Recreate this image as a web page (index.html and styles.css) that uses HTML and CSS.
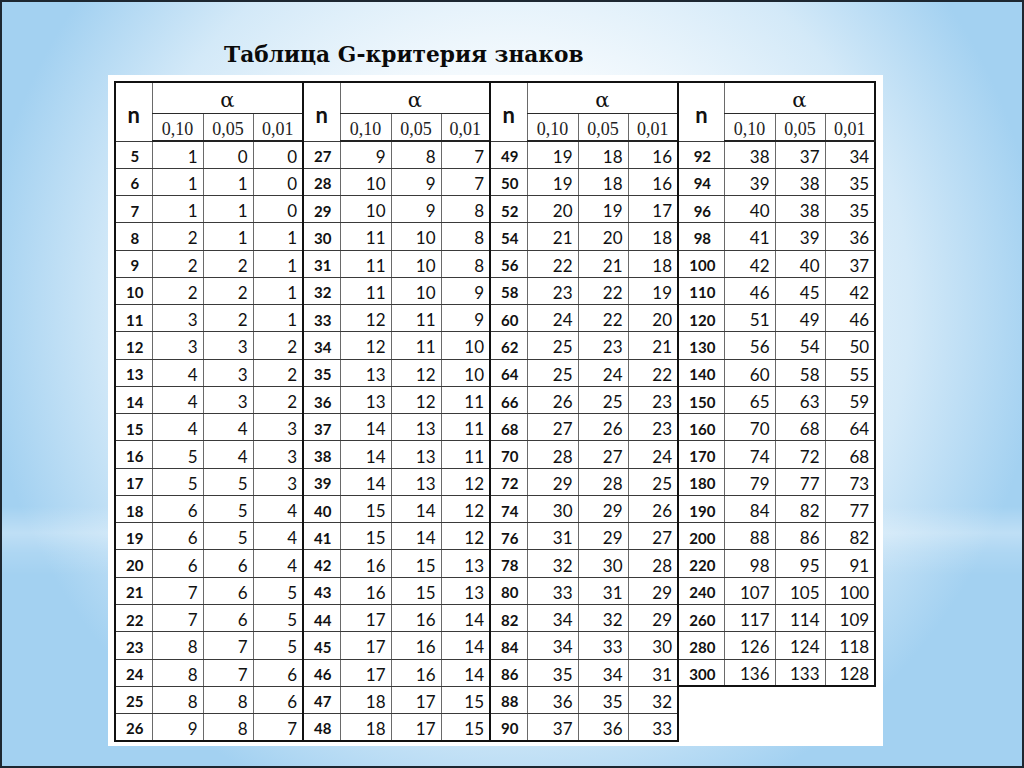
FILE: index.html
```html
<!DOCTYPE html>
<html lang="ru">
<head>
<meta charset="utf-8">
<title>Таблица G-критерия знаков</title>
<link rel="stylesheet" href="styles.css">
</head>
<body>
<div class="slide">
  <h1 class="title">Таблица G-критерия знаков</h1>
  <div class="panel">
    <table class="gt">
      <colgroup>
        <col class="cn"><col class="c1"><col class="c2"><col class="c3">
        <col class="cn"><col class="c1"><col class="c2"><col class="c3b">
        <col class="cn"><col class="c1"><col class="c2"><col class="c3">
        <col class="cn4"><col class="c1"><col class="c2"><col class="c3">
      </colgroup>
      <thead>
        <tr class="h1">
          <th class="n" rowspan="2">n</th><th class="a" colspan="3">α</th>
          <th class="n" rowspan="2">n</th><th class="a" colspan="3">α</th>
          <th class="n" rowspan="2">n</th><th class="a" colspan="3">α</th>
          <th class="n" rowspan="2">n</th><th class="a end" colspan="3">α</th>
        </tr>
        <tr class="h2">
          <th class="p">0,10</th><th class="p">0,05</th><th class="p">0,01</th>
          <th class="p">0,10</th><th class="p">0,05</th><th class="p">0,01</th>
          <th class="p">0,10</th><th class="p">0,05</th><th class="p">0,01</th>
          <th class="p">0,10</th><th class="p">0,05</th><th class="p end">0,01</th>
        </tr>
      </thead>
      <tbody>
        <tr><td class="n">5</td><td>1</td><td>0</td><td>0</td><td class="n">27</td><td>9</td><td>8</td><td>7</td><td class="n">49</td><td>19</td><td>18</td><td>16</td><td class="n">92</td><td>38</td><td>37</td><td class="end">34</td></tr>
        <tr><td class="n">6</td><td>1</td><td>1</td><td>0</td><td class="n">28</td><td>10</td><td>9</td><td>7</td><td class="n">50</td><td>19</td><td>18</td><td>16</td><td class="n">94</td><td>39</td><td>38</td><td class="end">35</td></tr>
        <tr><td class="n">7</td><td>1</td><td>1</td><td>0</td><td class="n">29</td><td>10</td><td>9</td><td>8</td><td class="n">52</td><td>20</td><td>19</td><td>17</td><td class="n">96</td><td>40</td><td>38</td><td class="end">35</td></tr>
        <tr><td class="n">8</td><td>2</td><td>1</td><td>1</td><td class="n">30</td><td>11</td><td>10</td><td>8</td><td class="n">54</td><td>21</td><td>20</td><td>18</td><td class="n">98</td><td>41</td><td>39</td><td class="end">36</td></tr>
        <tr><td class="n">9</td><td>2</td><td>2</td><td>1</td><td class="n">31</td><td>11</td><td>10</td><td>8</td><td class="n">56</td><td>22</td><td>21</td><td>18</td><td class="n">100</td><td>42</td><td>40</td><td class="end">37</td></tr>
        <tr><td class="n">10</td><td>2</td><td>2</td><td>1</td><td class="n">32</td><td>11</td><td>10</td><td>9</td><td class="n">58</td><td>23</td><td>22</td><td>19</td><td class="n">110</td><td>46</td><td>45</td><td class="end">42</td></tr>
        <tr><td class="n">11</td><td>3</td><td>2</td><td>1</td><td class="n">33</td><td>12</td><td>11</td><td>9</td><td class="n">60</td><td>24</td><td>22</td><td>20</td><td class="n">120</td><td>51</td><td>49</td><td class="end">46</td></tr>
        <tr><td class="n">12</td><td>3</td><td>3</td><td>2</td><td class="n">34</td><td>12</td><td>11</td><td>10</td><td class="n">62</td><td>25</td><td>23</td><td>21</td><td class="n">130</td><td>56</td><td>54</td><td class="end">50</td></tr>
        <tr><td class="n">13</td><td>4</td><td>3</td><td>2</td><td class="n">35</td><td>13</td><td>12</td><td>10</td><td class="n">64</td><td>25</td><td>24</td><td>22</td><td class="n">140</td><td>60</td><td>58</td><td class="end">55</td></tr>
        <tr><td class="n">14</td><td>4</td><td>3</td><td>2</td><td class="n">36</td><td>13</td><td>12</td><td>11</td><td class="n">66</td><td>26</td><td>25</td><td>23</td><td class="n">150</td><td>65</td><td>63</td><td class="end">59</td></tr>
        <tr><td class="n">15</td><td>4</td><td>4</td><td>3</td><td class="n">37</td><td>14</td><td>13</td><td>11</td><td class="n">68</td><td>27</td><td>26</td><td>23</td><td class="n">160</td><td>70</td><td>68</td><td class="end">64</td></tr>
        <tr><td class="n">16</td><td>5</td><td>4</td><td>3</td><td class="n">38</td><td>14</td><td>13</td><td>11</td><td class="n">70</td><td>28</td><td>27</td><td>24</td><td class="n">170</td><td>74</td><td>72</td><td class="end">68</td></tr>
        <tr><td class="n">17</td><td>5</td><td>5</td><td>3</td><td class="n">39</td><td>14</td><td>13</td><td>12</td><td class="n">72</td><td>29</td><td>28</td><td>25</td><td class="n">180</td><td>79</td><td>77</td><td class="end">73</td></tr>
        <tr><td class="n">18</td><td>6</td><td>5</td><td>4</td><td class="n">40</td><td>15</td><td>14</td><td>12</td><td class="n">74</td><td>30</td><td>29</td><td>26</td><td class="n">190</td><td>84</td><td>82</td><td class="end">77</td></tr>
        <tr><td class="n">19</td><td>6</td><td>5</td><td>4</td><td class="n">41</td><td>15</td><td>14</td><td>12</td><td class="n">76</td><td>31</td><td>29</td><td>27</td><td class="n">200</td><td>88</td><td>86</td><td class="end">82</td></tr>
        <tr><td class="n">20</td><td>6</td><td>6</td><td>4</td><td class="n">42</td><td>16</td><td>15</td><td>13</td><td class="n">78</td><td>32</td><td>30</td><td>28</td><td class="n">220</td><td>98</td><td>95</td><td class="end">91</td></tr>
        <tr><td class="n">21</td><td>7</td><td>6</td><td>5</td><td class="n">43</td><td>16</td><td>15</td><td>13</td><td class="n">80</td><td>33</td><td>31</td><td>29</td><td class="n">240</td><td>107</td><td>105</td><td class="end">100</td></tr>
        <tr><td class="n">22</td><td>7</td><td>6</td><td>5</td><td class="n">44</td><td>17</td><td>16</td><td>14</td><td class="n">82</td><td>34</td><td>32</td><td>29</td><td class="n">260</td><td>117</td><td>114</td><td class="end">109</td></tr>
        <tr><td class="n">23</td><td>8</td><td>7</td><td>5</td><td class="n">45</td><td>17</td><td>16</td><td>14</td><td class="n">84</td><td>34</td><td>33</td><td>30</td><td class="n">280</td><td>126</td><td>124</td><td class="end">118</td></tr>
        <tr><td class="n">24</td><td>8</td><td>7</td><td>6</td><td class="n">46</td><td>17</td><td>16</td><td>14</td><td class="n">86</td><td>35</td><td>34</td><td>31</td><td class="n b">300</td><td class="b">136</td><td class="b">133</td><td class="end b">128</td></tr>
        <tr><td class="n">25</td><td>8</td><td>8</td><td>6</td><td class="n">47</td><td>18</td><td>17</td><td>15</td><td class="n">88</td><td>36</td><td>35</td><td class="end">32</td><td class="blank" colspan="4"></td></tr>
        <tr class="last"><td class="n">26</td><td>9</td><td>8</td><td>7</td><td class="n">48</td><td>18</td><td>17</td><td>15</td><td class="n">90</td><td>37</td><td>36</td><td class="end">33</td><td class="blank" colspan="4"></td></tr>
      </tbody>
    </table>
  </div>
</div>
</body>
</html>
```

FILE: styles.css
```css
* { box-sizing: border-box; }

html, body {
  margin: 0;
  padding: 0;
}

.slide {
  width: 1024px;
  height: 768px;
  border: 2px solid #1d2731;
  background:
    linear-gradient(to bottom, rgba(255,255,255,0) 66%, rgba(255,255,255,0.3) 69.5%, rgba(255,255,255,0.12) 72%, rgba(255,255,255,0) 75%),
    radial-gradient(ellipse 52% 70% at 50% 40%, #ffffff 0%, #f3f9fd 45%, #d3e9f8 75%, #a3d1f1 100%);
  display: flex;
  flex-direction: column;
  align-items: flex-start;
}

.title {
  margin: 39px 0 0 222px;
  font-family: "DejaVu Serif", "Liberation Serif", serif;
  font-weight: bold;
  font-size: 21.7px;
  line-height: 28px;
  color: #0a0a0a;
}

.panel {
  margin: 6px 0 0 106px;
  background: #ffffff;
  padding: 6px 7px 4px 6px;
}

.gt {
  border-collapse: collapse;
  table-layout: fixed;
  width: 760px;
  font-family: Lato, "Liberation Sans", sans-serif;
  color: #111;
}

.gt col.cn { width: 37px; }
.gt col.cn4 { width: 46px; }
.gt col.c1 { width: 51px; }
.gt col.c2 { width: 50px; }
.gt col.c3 { width: 50px; }
.gt col.c3b { width: 49px; }

.gt th,
.gt td {
  padding: 0;
  border-left: 1px solid #6a6a6a;
  border-bottom: 1px solid #3a3a3a;
}

.gt thead tr.h1 th { border-top: 2px solid #111; height: 31px; }
.gt thead tr.h2 th { height: 28px; border-bottom: 2px solid #222; }

.gt th.n {
  border-left: 2px solid #111;
  font-family: Lato, "Liberation Sans", sans-serif;
  font-weight: 700;
  font-size: 22px;
  text-align: center;
  vertical-align: middle;
  padding-top: 5px;
}

.gt th.a {
  font-family: "DejaVu Serif", "Liberation Serif", serif;
  font-weight: normal;
  font-size: 21px;
  text-align: center;
  border-bottom: 1px solid #2a2a2a;
  padding-top: 4px;
}

.gt th.p {
  font-family: "Liberation Serif", "DejaVu Serif", serif;
  font-weight: normal;
  font-size: 18px;
  color: #222;
  text-align: center;
  padding-top: 5px;
}

.gt td {
  height: 27.27px;
  font-size: 17px;
  text-align: right;
  padding-right: 5px;
  padding-top: 3px;
  vertical-align: middle;
}

.gt td.n {
  border-left: 2px solid #111;
  font-weight: 700;
  font-size: 15px;
  text-align: center;
  padding-right: 0;
  padding-left: 2px;
}

.gt .end { border-right: 2px solid #111; }

.gt td.b { border-bottom: 2px solid #111; }
.gt tr.last td { border-bottom: 2px solid #111; }

.gt td.blank {
  border: none;
  border-left: 2px solid #111;
}
.gt tr.last td.blank { border-bottom: none; }
```
